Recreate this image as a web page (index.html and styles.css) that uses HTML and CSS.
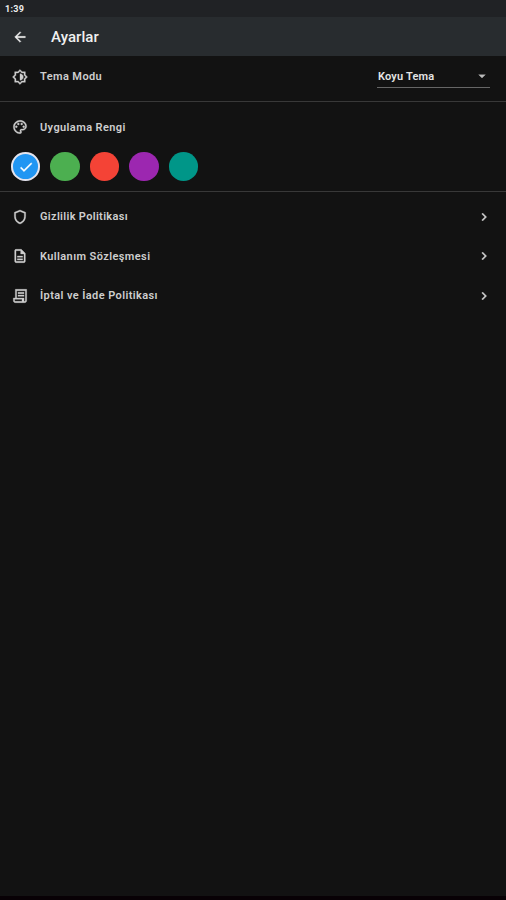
FILE: index.html
```html
<!DOCTYPE html>
<html lang="tr">
<head>
<meta charset="utf-8">
<title>Ayarlar</title>
<link rel="stylesheet" href="styles.css">
</head>
<body>
<div class="status"><span>1:39</span></div>
<header class="appbar">
  <svg class="icon" viewBox="0 0 24 24"><path d="M20 11H7.83l5.59-5.59L12 4l-8 8 8 8 1.41-1.41L7.83 13H20v-2z"/></svg>
  <h1>Ayarlar</h1>
</header>
<main>
  <section class="theme">
    <svg class="icon" viewBox="0 0 24 24"><path d="M20 15.31L23.31 12 20 8.69V4h-4.69L12 .69 8.69 4H4v4.69L.69 12 4 15.31V20h4.69L12 23.31 15.31 20H20v-4.69zm-2-.83V18h-3.52L12 20.48 9.52 18H6v-3.52L3.52 12 6 9.52V6h3.52L12 3.52 14.48 6H18v3.52L20.48 12 18 14.48z"/><path d="M12 7v10c2.76 0 5-2.240 5-5s-2.240-5-5-5z"/></svg>
    <span class="label mode">Tema Modu</span>
    <div class="select"><span class="label value">Koyu Tema</span><svg class="icon caret" viewBox="0 0 24 24"><path d="M7 10l5 5 5-5z"/></svg></div>
  </section>
  <section class="colors">
    <div class="title">
      <svg class="icon" viewBox="0 0 24 24"><path d="M12 22C6.49 22 2 17.51 2 12S6.49 2 12 2s10 4.040 10 9c0 3.310-2.690 6-6 6h-1.770c-.28 0-.5.22-.5.5 0 .12.050.23.13.33.41.47.64 1.060.64 1.670A2.500 2.500 0 0 1 12 22zm0-18c-4.410 0-8 3.590-8 8s3.590 8 8 8c.28 0 .5-.22.5-.5a.54.54 0 0 0-.14-.35c-.41-.46-.63-1.050-.63-1.650a2.500 2.500 0 0 1 2.500-2.500H16c2.210 0 4-1.790 4-4 0-3.860-3.590-7-8-7z"/><circle cx="6.5" cy="11.5" r="1.5"/><circle cx="9.5" cy="7.5" r="1.5"/><circle cx="14.5" cy="7.5" r="1.5"/><circle cx="17.5" cy="11.5" r="1.5"/></svg>
      <span class="label color">Uygulama Rengi</span>
    </div>
    <div class="swatches">
      <span class="swatch blue"><svg class="icon" viewBox="0 0 24 24"><path d="M9 16.17L4.83 12l-1.42 1.41L9 19 21 7l-1.41-1.41z"/></svg></span>
      <span class="swatch green"></span>
      <span class="swatch red"></span>
      <span class="swatch purple"></span>
      <span class="swatch teal"></span>
    </div>
  </section>
  <nav>
    <div class="row">
      <svg class="icon" viewBox="0 0 24 24"><path d="M12 1.500L3.500 5v6c0 5.550 3.500 10.200 8.500 11.500 5-1.300 8.500-5.950 8.500-11.500V5L12 1.500zM18.500 11c0 4.520-2.700 8.200-6.500 9.400-3.800-1.200-6.500-4.880-6.500-9.400V6.300L12 3.700l6.500 2.600V11z"/></svg>
      <span class="label privacy">Gizlilik Politikası</span>
      <svg class="icon chevron" viewBox="0 0 24 24"><path d="M10 6L8.59 7.41 13.17 12l-4.58 4.59L10 18l6-6z"/></svg>
    </div>
    <div class="row">
      <svg class="icon" viewBox="0 0 24 24"><path d="M8 16h8v2H8zm0-4h8v2H8zm6-10H6c-1.1 0-2 .9-2 2v16c0 1.1.89 2 1.99 2H18c1.1 0 2-.9 2-2V8l-6-6zm4 18H6V4h7v5h5v11z"/></svg>
      <span class="label terms">Kullanım Sözleşmesi</span>
      <svg class="icon chevron" viewBox="0 0 24 24"><path d="M10 6L8.59 7.41 13.17 12l-4.58 4.59L10 18l6-6z"/></svg>
    </div>
    <div class="row">
      <svg class="icon" viewBox="0 0 24 24"><path d="M5 2v13H2v4c0 1.660 1.340 3 3 3h14c1.660 0 3-1.340 3-3V2H5zm10 18H5c-.55 0-1-.45-1-1v-2h11v3zm5-1c0 .55-.45 1-1 1s-1-.45-1-1v-4H7V4h13v15zM9 6.500h9v2H9zM9 10.500h9v2H9z"/></svg>
      <span class="label refund">İptal ve İade Politikası</span>
      <svg class="icon chevron" viewBox="0 0 24 24"><path d="M10 6L8.59 7.41 13.17 12l-4.58 4.59L10 18l6-6z"/></svg>
    </div>
  </nav>
</main>
</body>
</html>
```
FILE: styles.css
```css
* { box-sizing: border-box; }
body {
  margin: 0;
  height: 900px;
  display: flex;
  flex-direction: column;
  background: #121212;
  border-bottom: 4px solid #080105;
  color: #cecece;
  font-family: Roboto, "Liberation Sans", sans-serif;
  overflow: hidden;
}
.status {
  height: 17px;
  padding: 1px 0 0 5px;
  background: #202225;
  color: #eee;
  font-size: 9px;
  font-weight: 700;
  line-height: 17px;
  letter-spacing: 0.3px;
}
.appbar {
  height: 39px;
  padding: 0 12px;
  display: flex;
  align-items: center;
  gap: 23px;
  background: #282c2f;
  color: #f0f0f0;
}
.appbar h1 {
  margin: 0;
  font-size: 15px;
  font-weight: 500;
  line-height: 20px;
  letter-spacing: 0.05px;
}
.icon {
  width: 16px;
  height: 16px;
  flex: none;
  display: block;
  fill: currentColor;
  stroke: currentColor;
  stroke-width: 0.5px;
}
.label {
  padding-top: 1px;
  font-size: 11px;
  font-weight: 600;
  line-height: 16px;
  white-space: nowrap;
  letter-spacing: 0.4px;
}
.theme {
  height: 46px;
  padding: 0 16px 4px 12px;
  display: flex;
  align-items: center;
  gap: 12px;
  border-bottom: 1px solid #383838;
}
.select {
  width: 113px;
  height: 23px;
  margin-left: auto;
  display: flex;
  align-items: center;
  justify-content: space-between;
  border-bottom: 1px solid #666;
  color: #e4e4e4;
}
.value { letter-spacing: 0.2px; padding-left: 1px; }
.caret { color: #bbb; }
.colors {
  height: 90px;
  padding: 17px 11px 0;
  border-bottom: 1px solid #383838;
}
.title {
  height: 16px;
  display: flex;
  align-items: center;
  gap: 12px;
  padding-left: 1px;
}
.swatches {
  display: flex;
  gap: 10px;
  padding-top: 17px;
}
.swatch {
  width: 29.4px;
  height: 29px;
  display: flex;
  align-items: center;
  justify-content: center;
  border-radius: 50%;
}
.blue { background: #2196f3; border: 2px solid #e4e4ee; color: #fff; }
.green { background: #4caf50; }
.red { background: #f44336; }
.purple { background: #9c27b0; }
.teal { background: #009688; }
nav { padding-top: 5px; }
.row {
  height: 39.5px;
  padding: 0 14px 0 12px;
  display: flex;
  align-items: center;
  gap: 12px;
}
.privacy { letter-spacing: 0.33px; }
.chevron { margin-left: auto; }
```
